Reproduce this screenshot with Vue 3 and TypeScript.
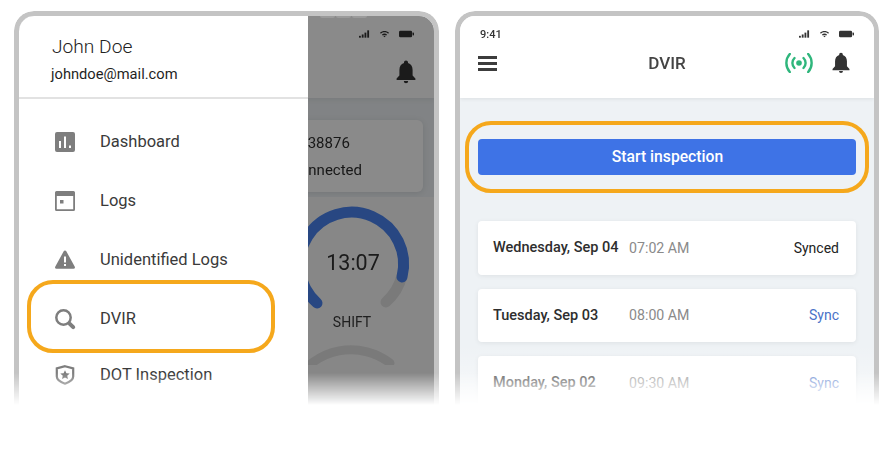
<script setup lang="ts">
interface NavItem { label: string; icon: string }
interface LogRow { day: string; time: string; status: string; synced: boolean }

const navItems: NavItem[] = [
  { label: 'Dashboard', icon: 'dash' },
  { label: 'Logs', icon: 'logs' },
  { label: 'Unidentified Logs', icon: 'warn' },
  { label: 'DVIR', icon: 'search' },
  { label: 'DOT Inspection', icon: 'shield' },
]

const rows: LogRow[] = [
  { day: 'Wednesday, Sep 04', time: '07:02 AM', status: 'Synced', synced: true },
  { day: 'Tuesday, Sep 03', time: '08:00 AM', status: 'Sync', synced: false },
  { day: 'Monday, Sep 02', time: '09:30 AM', status: 'Sync', synced: false },
]
</script>

<template>
  <div class="page">
    <svg class="defs" width="0" height="0" aria-hidden="true">
      <defs>
        <symbol id="i-bell" viewBox="0 0 20 24">
          <path d="M10 0.5c-1.2 0-2 .8-2 2v.6C4.9 4 3.4 6.8 3.4 10v5.600L.6 18.600v1.400h18.800v-1.400l-2.800-3V10c0-3.200-1.500-6-4.600-6.900v-.6c0-1.200-.8-2-2-2z" />
          <path d="M7.800 21h4.400a2.200 2.200 0 0 1-4.400 0z" />
        </symbol>
        <symbol id="i-signal" viewBox="0 0 12 8">
          <rect x="0" y="6" width="2" height="2" />
          <rect x="3" y="4.500" width="2" height="3.500" />
          <rect x="6" y="2.500" width="2" height="5.500" />
          <rect x="9" y="0" width="2" height="8" />
        </symbol>
        <symbol id="i-wifi" viewBox="0 0 11 8">
          <path d="M0 2.600C3-.6 8-.6 11 2.600l-1.100 1.100C7.500 1.300 3.500 1.300 1.100 3.700z" />
          <path d="M2.300 4.800c1.800-1.700 4.600-1.700 6.400 0L7.600 5.900c-1.200-1.100-3-1.100-4.200 0z" />
          <path d="M4.200 6.700c.7-.7 1.900-.7 2.600 0L5.500 8z" />
        </symbol>
        <symbol id="i-battery" viewBox="0 0 16 8">
          <rect x="0" y="0.500" width="14" height="7" rx="1.500" />
          <rect x="14.500" y="2.500" width="1.500" height="3" rx=".7" />
        </symbol>
      </defs>
    </svg>

    <!-- left phone: drawer open over the dashboard -->
    <section class="phone phone-left">
      <div class="under">
        <div class="under-top">
          <div class="status">
            <span class="clock" />
            <div class="status-icons">
              <svg class="ic-signal"><use href="#i-signal" /></svg>
              <svg class="ic-wifi"><use href="#i-wifi" /></svg>
              <svg class="ic-battery"><use href="#i-battery" /></svg>
            </div>
          </div>
          <div class="under-bar">
            <svg class="ic-bell"><use href="#i-bell" /></svg>
          </div>
        </div>
        <div class="under-body">
          <div class="vehicle">
            <div class="vehicle-text">
              <span>#538876</span>
              <span>Connected</span>
            </div>
          </div>
          <div class="gauges">
            <svg class="gauge" width="122" height="122" viewBox="0 0 122 122">
              <path class="track" d="M111 73.500A52 52 0 0 1 95 100" />
              <path class="arc" d="M26 101A52 52 0 1 1 111 75" />
              <text x="62" y="68" class="gauge-time" text-anchor="middle">13:07</text>
            </svg>
            <span class="gauge-label">SHIFT</span>
            <svg class="gauge-next" width="122" height="20" viewBox="0 0 122 20">
              <path class="track thin" d="M5 36A64 64 0 0 1 99 18" />
            </svg>
          </div>
        </div>
        <div class="scrim" />
      </div>

      <i class="side-keys"><b /><b /><b /></i>

      <aside class="drawer">
        <div class="profile">
          <div class="name">John Doe</div>
          <div class="email">johndoe@mail.com</div>
        </div>
        <nav class="nav">
          <div v-for="item in navItems" :key="item.label" class="nav-item">
            <svg class="nav-icon" viewBox="0 0 20 20">
              <template v-if="item.icon === 'dash'">
                <path fill-rule="evenodd" d="M2 0h16a2 2 0 0 1 2 2v16a2 2 0 0 1-2 2H2a2 2 0 0 1-2-2V2a2 2 0 0 1 2-2zM4 9v7h2V9zM9 4.500V16h2V4.500zM14 13.500V16h2v-2.500z" />
              </template>
              <template v-else-if="item.icon === 'logs'">
                <path fill-rule="evenodd" d="M1.500 0h17A1.500 1.500 0 0 1 20 1.500v17a1.500 1.500 0 0 1-1.500 1.500h-17A1.500 1.500 0 0 1 0 18.500v-17A1.500 1.500 0 0 1 1.500 0zM1.800 5v13.200h16.400V5z" />
                <rect x="5" y="9" width="3.500" height="3.500" />
              </template>
              <template v-else-if="item.icon === 'warn'">
                <path fill-rule="evenodd" d="M10 .5c.6 0 1 .3 1.300.8l8.500 15.400c.5 1 -.1 2-1.200 2H1.400c-1.100 0-1.700-1-1.200-2L8.700 1.300C9 .8 9.400 .5 10 .5zM9 6.500v6h2v-6zM9 14v2h2v-2z" />
              </template>
              <template v-else-if="item.icon === 'search'">
                <circle class="line lens" cx="8.500" cy="8.500" r="7.200" />
                <path class="handle" d="M14.800 14.800l3.400 3.400" />
              </template>
              <template v-else>
                <path class="line" d="M10 1.200l8.200 2.200v8c0 3-3.500 5.600-8.200 7.300-4.700-1.700-8.200-4.300-8.200-7.300v-8z" />
                <path d="M10 5.200l1.400 3.100 3.300.3-2.500 2.200.8 3.300-3-1.700-3 1.700.8-3.300-2.500-2.200 3.300-.3z" />
              </template>
            </svg>
            <span>{{ item.label }}</span>
          </div>
        </nav>
      </aside>

      <div class="ring ring-nav" />
    </section>

    <!-- right phone: DVIR list -->
    <section class="phone phone-right">
      <header class="top">
        <div class="status">
          <span class="clock">9:41</span>
          <div class="status-icons">
            <svg class="ic-signal"><use href="#i-signal" /></svg>
            <svg class="ic-wifi"><use href="#i-wifi" /></svg>
            <svg class="ic-battery"><use href="#i-battery" /></svg>
          </div>
        </div>
        <div class="bar">
          <div class="menu"><i /><i /><i /></div>
          <h1 class="title">DVIR</h1>
          <div class="bar-actions">
            <svg class="ic-live" width="28" height="20" viewBox="0 0 28 20">
              <circle cx="14" cy="10" r="2.800" />
              <path d="M9.500 5a7 7 0 0 0 0 10M18.500 5a7 7 0 0 1 0 10M4.800 1a13.500 13.500 0 0 0 0 18M23.200 1a13.500 13.500 0 0 1 0 18" />
            </svg>
            <svg class="ic-bell"><use href="#i-bell" /></svg>
          </div>
        </div>
      </header>
      <main class="list">
        <button class="start" type="button">Start inspection</button>
        <div class="rows">
          <div v-for="row in rows" :key="row.day" class="row">
            <span class="day">{{ row.day }}</span>
            <span class="time">{{ row.time }}</span>
            <span :class="row.synced ? 'state' : 'state link'">{{ row.status }}</span>
          </div>
        </div>
      </main>
      <div class="wash" />
      <div class="ring ring-start" />
    </section>
  </div>
</template>

<style>
html, body { background: #fff; }
</style>

<style scoped>
.page {
  display: flex;
  gap: 16px;
  padding: 11px 15px 0 14px;
  width: 894px;
  height: 456px;
  box-sizing: border-box;
  font-family: Roboto, "Liberation Sans", sans-serif;
  color: #2e2e2e;
  overflow: hidden;
}
.defs { position: absolute; }

.phone {
  position: relative;
  width: 425px;
  height: 394px;
  box-sizing: border-box;
  border: 5px solid #c4c4c4;
  border-bottom: 0;
  border-radius: 20px 20px 0 0;
  overflow: hidden;
  background: #fff;
  -webkit-mask-image: linear-gradient(to bottom, #000 362px, transparent 394px);
  mask-image: linear-gradient(to bottom, #000 362px, transparent 394px);
}
.phone-right { width: 424px; }

.status {
  display: flex;
  justify-content: space-between;
  align-items: center;
  height: 36px;
  padding: 0 20px;
}
.clock { font-size: 11px; font-weight: 500; color: #333; }
.status-icons { display: flex; align-items: center; gap: 10px; fill: #333; }
.ic-signal { width: 11px; height: 8px; }
.ic-wifi { width: 9px; height: 8px; }
.ic-battery { width: 15px; height: 8px; }
.ic-bell { width: 18px; height: 22px; fill: #333; }

/* dimmed dashboard under the drawer */
.under {
  position: absolute;
  inset: 0;
  background: #eef2f5;
}
.under-top {
  height: 82px;
  background: #fff;
  box-shadow: 0 2px 5px rgba(0, 0, 0, .06);
}
.under-bar {
  display: flex;
  justify-content: flex-end;
  padding: 8px 18px 0 0;
}
.under-bar .ic-bell { width: 20px; height: 24px; }
.under-body { padding: 22px 11px 0; display: flex; flex-direction: column; }
.vehicle {
  height: 72px;
  box-sizing: border-box;
  background: #fff;
  border-radius: 6px;
  box-shadow: 0 1px 6px rgba(0, 0, 0, .1);
  padding: 14px 0 0 260px;
}
.vehicle-text { display: flex; flex-direction: column; gap: 9px; font-size: 15px; line-height: 18px; }
.gauges {
  display: flex;
  flex-direction: column;
  align-items: center;
  margin: 5px -11px 0;
  padding: 5px 21px 0 272px;
  min-height: 200px;
  box-sizing: border-box;
  background: #fafafa;
}
.gauge { display: block; }
.track, .arc { fill: none; stroke-width: 11; stroke-linecap: round; }
.track { stroke: #e2e2e2; }
.track.thin { stroke-width: 9; }
.arc { stroke: #4a84f0; }
.gauge-time { font: 400 21.500px Roboto, sans-serif; fill: #333; }
.gauge-label { font-size: 14px; line-height: 18px; margin-top: -11px; color: #3a3a3a; }
.gauge-next { display: block; margin-top: 14px; }
.scrim { position: absolute; inset: 0; background: rgba(0, 0, 0, .46); }
.side-keys { position: absolute; top: -3px; left: 301px; display: flex; gap: 1px; }
.side-keys b { width: 15px; height: 5px; background: #9b9b9b; border-radius: 2px; }

.drawer {
  position: absolute;
  left: 0;
  top: 0;
  bottom: 0;
  width: 289px;
  background: #fff;
}
.profile {
  height: 83px;
  box-sizing: border-box;
  padding: 18px 0 0 33px;
  border-bottom: 2px solid #e2e2e2;
}
.name { font-size: 19.200px; font-weight: 300; line-height: 26px; color: #222; }
.email { font-size: 14.700px; line-height: 20px; margin-top: 4px; margin-left: -1px; color: #1f1f1f; }
.nav { padding-top: 13px; }
.nav-item {
  display: flex;
  align-items: center;
  gap: 25px;
  height: 59px;
  padding-left: 36px;
  font-size: 16.500px;
  color: #3a3a3a;
}
.nav-item:last-child { margin-top: -3px; }
.nav-icon { width: 20px; height: 20px; fill: #7e7e7e; flex: none; overflow: visible; }
.line { fill: none; stroke: #7e7e7e; stroke-width: 2.200; }
.lens { stroke-width: 2.500; }
.handle { fill: none; stroke: #7e7e7e; stroke-width: 4; stroke-linecap: round; }

.ring {
  position: absolute;
  border: 4px solid #f5a81c;
  border-radius: 26px;
  box-sizing: border-box;
  pointer-events: none;
}
.ring-nav { left: 8px; top: 264px; width: 248px; height: 73px; }
.ring-start { left: 5px; top: 105px; width: 404px; height: 72px; }

/* DVIR screen */
.top {
  background: #fff;
  height: 82px;
  position: relative;
  box-shadow: 0 1px 4px rgba(0, 0, 0, .08);
}
.bar {
  display: flex;
  align-items: center;
  justify-content: space-between;
  padding: 0 24px 0 18px;
  margin-top: -5px;
  height: 32px;
  position: relative;
}
.menu { display: flex; flex-direction: column; gap: 3px; width: 19px; }
.menu i { display: block; height: 3px; background: #3c3c3c; }
.title {
  position: absolute;
  left: 0;
  right: 0;
  margin: 0;
  text-align: center;
  font-size: 17px;
  font-weight: 500;
  color: #444;
}
.bar-actions { display: flex; align-items: center; gap: 19px; }
.ic-live { fill: #2fb67c; stroke: none; }
.ic-live path { fill: none; stroke: #2fb67c; stroke-width: 2.400; stroke-linecap: round; }
.list {
  background: #eef2f5;
  height: 307px;
  padding: 41px 18px 0;
  box-sizing: border-box;
}
.start {
  display: block;
  width: 378px;
  height: 36px;
  padding: 0 0 2px 1px;
  border: 0;
  border-radius: 4px;
  background: #3e73e6;
  color: #fff;
  font: 500 15.700px Roboto, sans-serif;
}
.rows { display: flex; flex-direction: column; gap: 14px; margin-top: 46px; }
.row {
  display: flex;
  align-items: center;
  height: 53.500px;
  padding: 0 17px 0 15px;
  background: #fff;
  border-radius: 4px;
  box-shadow: 0 1px 5px rgba(0, 0, 0, .07);
  font-size: 14px;
}
.day { width: 136px; font-size: 14.500px; font-weight: 500; color: #2e2e2e; }
.time { flex: 1; color: #8a8a8a; font-size: 14.200px; }
.state { color: #222; }
.state.link { color: #4a72c8; }
.wash {
  position: absolute;
  left: 0;
  right: 0;
  bottom: 0;
  height: 60px;
  background: linear-gradient(to bottom, rgba(255, 255, 255, 0), rgba(255, 255, 255, .6));
}
</style>
